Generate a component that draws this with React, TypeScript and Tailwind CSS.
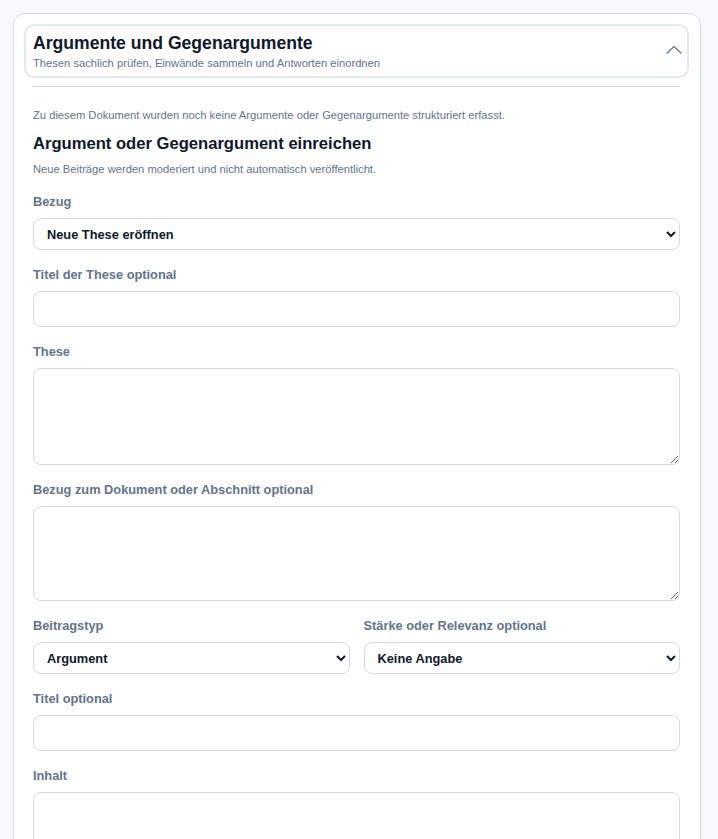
const Label = ({ children }: { children: React.ReactNode }) => (
  <label className="block text-[12.8px] leading-4 font-bold text-[#64748b] mb-2">{children}</label>
);

const selectCls =
  "block w-full h-8 rounded-lg border border-[#d5d9e0] bg-white pl-[9px] pr-[10px] text-[12.8px] font-bold text-[#0f172a]";
const inputCls = "block w-full h-9 rounded-lg border border-[#d5d9e0] bg-white px-3 text-[12.8px]";
const areaCls = "block w-full rounded-lg border border-[#d5d9e0] bg-white px-3 py-2 text-[12.8px]";

export default function App() {
  return (
    <div className="min-h-screen bg-[#f8f9fc] pt-[13px] pl-[13px] pr-[17px] font-['Liberation_Sans',Arial,sans-serif]">
      <div className="rounded-xl border border-[#d7dce4] bg-white pt-[10px] pl-[10px] pr-[11px] h-[860px]">
        {/* Header */}
        <div className="flex items-center justify-between rounded-[10px] border-2 border-[#deeceb] pl-[7px] pr-[4px] py-[6px]">
          <div>
            <h2 className="text-[17.6px] leading-[22px] font-bold text-[#0f172a]">Argumente und Gegenargumente</h2>
            <p className="mt-[2px] text-[11.2px] leading-[14px] text-[#64748b]">
              Thesen sachlich prüfen, Einwände sammeln und Antworten einordnen
            </p>
          </div>
          <svg width="18" height="12" viewBox="0 0 18 12" className="mb-[2px] text-[#64748b]">
            <path d="M1.5 9.5 L9 2.5 L16.5 9.5" fill="none" stroke="currentColor" strokeWidth="1.2" />
          </svg>
        </div>

        <div className="px-[9px]">
          <div className="mt-2 h-px bg-[#d5d9e0]" />
          <p className="mt-[21px] text-[11.2px] leading-[14px] text-[#64748b]">
            Zu diesem Dokument wurden noch keine Argumente oder Gegenargumente strukturiert erfasst.
          </p>
          <h3 className="mt-[11px] text-[16.6px] leading-[21px] font-bold text-[#0f172a]">
            Argument oder Gegenargument einreichen
          </h3>
          <p className="mt-[8px] text-[11.2px] leading-[14px] text-[#64748b]">
            Neue Beiträge werden moderiert und nicht automatisch veröffentlicht.
          </p>

          <form className="mt-[18px] flex flex-col gap-[17px]">
            <div>
              <Label>Bezug</Label>
              <select className={selectCls} defaultValue="neu">
                <option value="neu">Neue These eröffnen</option>
              </select>
            </div>
            <div>
              <Label>Titel der These optional</Label>
              <input type="text" className={inputCls} />
            </div>
            <div>
              <Label>These</Label>
              <textarea className={areaCls + " h-[97px]"} />
            </div>
            <div>
              <Label>Bezug zum Dokument oder Abschnitt optional</Label>
              <textarea className={areaCls + " h-[95px]"} />
            </div>
            <div className="grid grid-cols-2 gap-[14px]">
              <div>
                <Label>Beitragstyp</Label>
                <select className={selectCls} defaultValue="arg">
                  <option value="arg">Argument</option>
                  <option value="gegen">Gegenargument</option>
                </select>
              </div>
              <div>
                <Label>Stärke oder Relevanz optional</Label>
                <select className={selectCls} defaultValue="none">
                  <option value="none">Keine Angabe</option>
                </select>
              </div>
            </div>
            <div>
              <Label>Titel optional</Label>
              <input type="text" className={inputCls} />
            </div>
            <div>
              <Label>Inhalt</Label>
              <textarea className={areaCls + " h-[120px]"} />
            </div>
          </form>
        </div>
      </div>
    </div>
  );
}
